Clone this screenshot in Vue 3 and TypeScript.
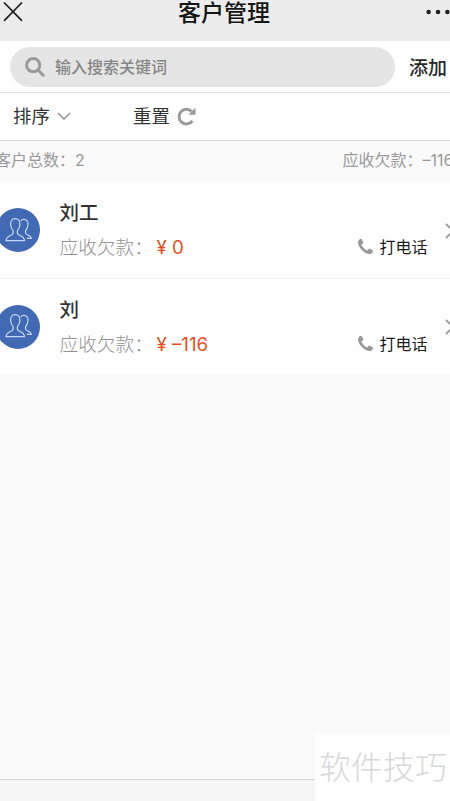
<script setup lang="ts">
interface Customer {
  id: number
  name: string
  debt: string
}

const customers: Customer[] = [
  { id: 1, name: '刘工', debt: '0' },
  { id: 2, name: '刘', debt: '–116' },
]
</script>

<template>
  <div class="page">
    <header class="titlebar">
      <svg class="close" viewBox="0 0 20 20"><path d="M1 0.5 19 18.8M19 0.5 1 18.8" /></svg>
      <h1>客户管理</h1>
      <svg class="more" viewBox="0 0 24 6">
        <circle cx="2.6" cy="3" r="2.3" /><circle cx="12" cy="3" r="2.3" /><circle cx="21.4" cy="3" r="2.3" />
      </svg>
    </header>

    <div class="searchbar">
      <div class="search">
        <svg viewBox="0 0 20 20"><circle cx="8.2" cy="8.2" r="6.6" /><path d="m13 13 5.2 5.2" /></svg>
        <span>输入搜索关键词</span>
      </div>
      <span class="add">添加</span>
    </div>

    <div class="filters">
      <div class="sort">
        <span>排序</span>
        <svg viewBox="0 0 14 9"><path d="m1 1 6 6 6-6" /></svg>
      </div>
      <div class="reset">
        <span>重置</span>
        <svg viewBox="0 0 19 19">
          <path class="ring" d="M14.600 4.500A7.300 7.300 0 1 0 15.400 13.800" />
          <path class="tip" d="M18.500 0.800V7.800H11.500Z" />
        </svg>
      </div>
    </div>

    <div class="summary">
      <span>客户总数：2</span>
      <span class="total">应收欠款：–116</span>
    </div>

    <main class="list">
      <section v-for="c in customers" :key="c.id" class="row">
        <div class="avatar">
          <svg viewBox="0 0 30 28">
            <path d="M17.500 4.200C18.500 2.800 20 2.300 21.500 2.600C25 3.200 25.600 6.200 25 9.500C24.600 11.800 23.800 13.500 22.600 14.800V17.500C23 19.500 28.500 19.500 28.700 23H24" />
            <path d="M11.500 1.800C7.800 1.800 6.300 4.500 6.500 8C6.700 11 7.700 13.200 9.200 14.800V17.500C9 20.500 1.800 19.500 1.500 25.500H21.500C21.200 19.500 14 20.500 13.800 17.500V14.800C15.300 13.200 16.300 11 16.500 8C16.700 4.500 15.200 1.800 11.500 1.800Z" />
          </svg>
        </div>
        <div class="info">
          <div class="name">{{ c.name }}</div>
          <div class="debt"><span>应收欠款：</span><span class="money"><i>¥</i>{{ c.debt }}</span></div>
        </div>
        <div class="call">
          <svg viewBox="0 0 1408 1408">
            <path d="M1408 1112q0 27-10 70.500t-21 68.500q-21 50-122 106-94 51-186 51-27 0-53-3.500t-57.500-12.500-47-14.500T856 1357.500 807 1339q-98-35-175-83-127-79-264-216T152 776q-48-77-83-175-3-9-18.500-49T30 496.500t-14.500-47T3.500 392 0 339q0-92 51-186Q107 52 157 31q25-11 68.500-21T296 0q14 0 21 3 18 6 53 76 11 19 30 54t35 63.500 31 53.500q3 4 17.500 25t21.500 35.500 7 28.500q0 20-28.500 50t-62 55-62 53-28.500 46q0 9 5 22.500t8.500 20.500 14 24 11.500 19q76 137 174 235t235 174q2 1 19 11.500t24 14 20.500 8.500 22.500 5q18 0 46-28.500t53-62 55-62 50-28.500q14 0 28.500 7t35.500 21.500 25 17.500q25 15 53.500 31t63.500 35 54 30q70 35 76 53 3 7 3 21z" />
          </svg>
          <span>打电话</span>
        </div>
        <svg class="chevron" viewBox="0 0 9 16"><path d="m1 1 7 7-7 7" /></svg>
      </section>
    </main>

    <footer class="bottom"></footer>
    <div class="watermark">软件技巧</div>
  </div>
</template>

<style>
body {
  margin: 0;
  overflow: hidden;
}
</style>

<style scoped>
.page {
  position: relative;
  box-sizing: border-box;
  width: 450px;
  height: 801px;
  overflow: hidden;
  display: flex;
  flex-direction: column;
  background: #fafafa;
  font-family: Inter, "Noto Sans CJK SC", sans-serif;
  white-space: nowrap;
}
svg {
  display: block;
  flex: none;
  fill: none;
}
.titlebar {
  height: 41px;
  flex: none;
  display: flex;
  align-items: flex-start;
  justify-content: space-between;
  background: #ececec;
}
.close {
  width: 20px;
  height: 20px;
  margin: 2px 0 0 3px;
  stroke: #222;
  stroke-width: 1.7;
}
h1 {
  margin: 0;
  padding-right: 1px;
  font-size: 23px;
  line-height: 26px;
  font-weight: 500;
  color: #151515;
}
.more {
  width: 24px;
  height: 6px;
  margin: 9px 0 0;
  fill: #222;
}
.searchbar {
  height: 51px;
  flex: none;
  display: flex;
  align-items: center;
  background: #fff;
  border-bottom: 1px solid #dcdcdc;
}
.search {
  width: 385px;
  height: 40px;
  margin-left: 10px;
  box-sizing: border-box;
  padding-left: 15px;
  display: flex;
  align-items: center;
  gap: 10px;
  border-radius: 20px;
  background: #e5e5e5;
  color: #858585;
  font-size: 16px;
  font-weight: 500;
}
.search span {
  padding-bottom: 2px;
}
.search svg {
  width: 20px;
  height: 20px;
  stroke: #999;
  stroke-width: 3;
  stroke-linecap: round;
}
.add {
  margin-left: 14px;
  font-size: 19px;
  font-weight: 500;
  color: #282828;
}
.filters {
  height: 47px;
  flex: none;
  display: flex;
  align-items: center;
  background: #fff;
  border-bottom: 1px solid #d8d8d8;
  font-size: 18.4px;
  color: #333;
}
.filters span {
  padding-bottom: 3px;
}
.sort,
.reset {
  display: flex;
  align-items: center;
}
.sort {
  width: 120px;
  padding-left: 13px;
  gap: 7px;
}
.reset {
  gap: 7px;
}
.sort svg {
  width: 14px;
  height: 9px;
  stroke: #999;
  stroke-width: 1.6;
}
.reset svg {
  width: 19px;
  height: 19px;
  margin-bottom: 1px;
}
.ring {
  stroke: #999;
  stroke-width: 3;
}
.tip {
  fill: #999;
}
.summary {
  height: 41px;
  flex: none;
  display: flex;
  align-items: center;
  justify-content: space-between;
  margin: 0 -10px 0 -5px;
  line-height: 37px;
  padding-bottom: 2px;
  box-sizing: border-box;
  font-size: 16px;
  color: #999;
}
.total {
  width: 117.500px;
}
.row {
  height: 96px;
  box-sizing: border-box;
  display: flex;
  align-items: center;
  background: #fff;
}
.row + .row {
  border-top: 1px solid #f6f6f6;
}
.avatar {
  width: 44px;
  height: 44px;
  flex: none;
  margin-left: -4px;
  display: flex;
  align-items: center;
  justify-content: center;
  border-radius: 50%;
  background: #4169b4;
}
.avatar svg {
  width: 29px;
  height: 26px;
  margin-bottom: 1px;
  stroke: #c5d5f1;
  stroke-width: 1.3;
}
.info {
  width: 298px;
  flex: none;
  margin-left: 19.500px;
}
.name {
  padding-top: 1px;
  font-size: 19.500px;
  line-height: 35px;
  font-weight: 500;
  color: #333;
}
.debt {
  display: flex;
  font-size: 18.700px;
  line-height: 34px;
  font-weight: 300;
  color: #929292;
}
.money {
  margin-left: 3.500px;
  font-weight: 400;
  font-size: 18.700px;
  color: #e2501f;
}
.money i {
  display: inline-block;
  width: 15.500px;
  font-style: normal;
}
.call {
  display: flex;
  align-items: center;
  gap: 7px;
  margin-top: 33px;
  font-size: 16px;
  color: #1c1c1c;
}
.call span {
  padding-bottom: 1px;
}
.call svg {
  width: 15px;
  height: 15px;
  fill: #999;
}
.chevron {
  width: 9px;
  height: 16px;
  margin: 1px 0 0 17px;
  stroke: #999;
  stroke-width: 1.8;
}
.bottom {
  height: 22px;
  flex: none;
  box-sizing: border-box;
  margin-top: auto;
  border-top: 1px solid #d6d6d6;
  background: #f6f6f6;
}
.watermark {
  position: absolute;
  right: 0;
  bottom: 0;
  width: 135px;
  height: 67px;
  box-sizing: border-box;
  padding-left: 4px;
  background: #fff;
  color: #d8d8d8;
  font-size: 32px;
  line-height: 67px;
  font-weight: 300;
}
</style>
